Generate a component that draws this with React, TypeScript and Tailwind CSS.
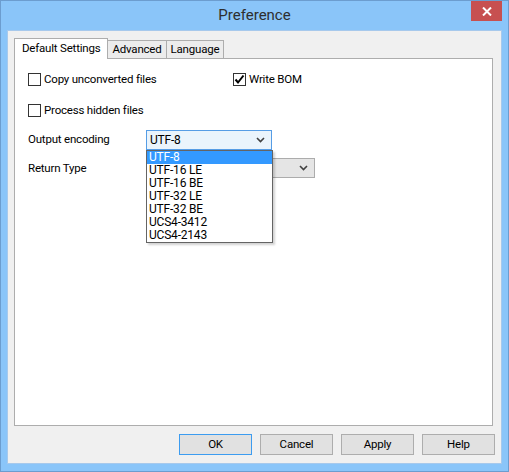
import { useState } from 'react';

const font = { fontFamily: 'Roboto, "Noto Sans", sans-serif' };

const encodings = ['UTF-8', 'UTF-16 LE', 'UTF-16 BE', 'UTF-32 LE', 'UTF-32 BE', 'UCS4-3412', 'UCS4-2143'];

function Chevron() {
  return (
    <svg width="9" height="6" viewBox="0 0 9 6" className="shrink-0">
      <path d="M1 1 L4.5 4.5 L8 1" fill="none" stroke="#404040" strokeWidth="1.6" />
    </svg>
  );
}

function Checkbox({ label, checked }: { label: string; checked?: boolean }) {
  return (
    <label className="flex items-center gap-[3px] leading-none text-black">
      <span className="flex h-[13px] w-[13px] items-center justify-center border border-[#333333] bg-white">
        {checked && (
          <svg width="11" height="11" viewBox="0 0 11 11">
            <path d="M1.5 5.5 L4 8.5 L9.5 1.5" fill="none" stroke="#000" strokeWidth="2" />
          </svg>
        )}
      </span>
      <span>{label}</span>
    </label>
  );
}

function Button({ label, primary }: { label: string; primary?: boolean }) {
  return (
    <button
      className={`flex h-[21px] w-[73px] items-center justify-center border bg-[#e1e1e1] leading-none text-black ${
        primary ? 'border-[#3c9cf0]' : 'border-[#adadad]'
      }`}
    >
      {label}
    </button>
  );
}

export default function App() {
  const [tab] = useState('Default Settings');
  const tabs = ['Default Settings', 'Advanced', 'Language'];

  return (
    <div
      className="h-[472px] w-[509px] border border-[#6c9dcf] bg-[#8ac5f9] text-[11.5px] tracking-[-0.2px]"
      style={font}
    >
      {/* title bar */}
      <div className="relative flex h-[29px] items-center justify-center">
        <span className="text-[15px] tracking-normal text-[#2e2e2e]">Preference</span>
        <div className="absolute right-[6px] top-0 flex h-[20px] w-[31px] items-center justify-center bg-[#c75050]">
          <svg width="10" height="9" viewBox="0 0 10 9">
            <path d="M1 0.5 L9 8.5 M9 0.5 L1 8.5" stroke="#fff" strokeWidth="2" />
          </svg>
        </div>
      </div>

      {/* client */}
      <div className="mx-[6px] flex h-[434px] flex-col border border-[#a7c9ec] bg-[#f0f0f0] pl-[6px] pr-[8px] pt-[7px]">
        {/* tabs */}
        <div className="flex h-[20px] items-end">
          {tabs.map((t) =>
            t === tab ? (
              <div
                key={t}
                className="relative z-10 -mb-px flex h-[21px] items-center border border-b-0 border-[#adadad] bg-white px-[7px] text-black"
              >
                {t}
              </div>
            ) : (
              <div
                key={t}
                className="-ml-px flex h-[18px] items-center border border-b-0 border-[#adadad] bg-[#ececec] px-[4px] text-black"
              >
                {t}
              </div>
            )
          )}
        </div>

        {/* panel */}
        <div className="relative h-[368px] border border-[#adadad] bg-white pl-[13px] pt-[14px]">
          <div className="flex h-[13px] items-center">
            <div className="w-[205px]">
              <Checkbox label="Copy unconverted files" />
            </div>
            <Checkbox label="Write BOM" checked />
          </div>
          <div className="mt-[18px] flex h-[13px] items-center">
            <Checkbox label="Process hidden files" />
          </div>

          <div className="mt-[13px] flex h-[20px] items-center">
            <span className="w-[118px] text-black">Output encoding</span>
            <div className="relative">
              <div className="flex h-[20px] w-[126px] items-center justify-between border border-[#569de5] bg-[#eaf4fc] pl-[3px] pr-[6px] text-[12px] text-black">
                <span>UTF-8</span>
                <Chevron />
              </div>
              <div className="absolute left-0 top-[20px] z-20 w-[127px] border border-[#646464] bg-white shadow-[2px_2px_2px_rgba(0,0,0,0.18)]">
                {encodings.map((e, i) => (
                  <div
                    key={e}
                    className={`h-[13px] pl-[2px] text-[12px] leading-[13px] ${
                      i === 0 ? 'bg-[#3399ff] text-white' : 'text-black'
                    }`}
                  >
                    {e}
                  </div>
                ))}
              </div>
            </div>
          </div>

          <div className="mt-[8px] flex h-[20px] items-center">
            <span className="w-[118px] pt-[2px] text-black">Return Type</span>
            <div className="flex h-[20px] w-[169px] items-center justify-end border border-[#acacac] bg-[#e5e5e5] pr-[6px]">
              <Chevron />
            </div>
          </div>
        </div>

        {/* buttons */}
        <div className="-mr-[2px] mt-[8px] flex justify-end gap-[8px]">
          <Button label="OK" primary />
          <Button label="Cancel" />
          <Button label="Apply" />
          <Button label="Help" />
        </div>
      </div>
    </div>
  );
}
